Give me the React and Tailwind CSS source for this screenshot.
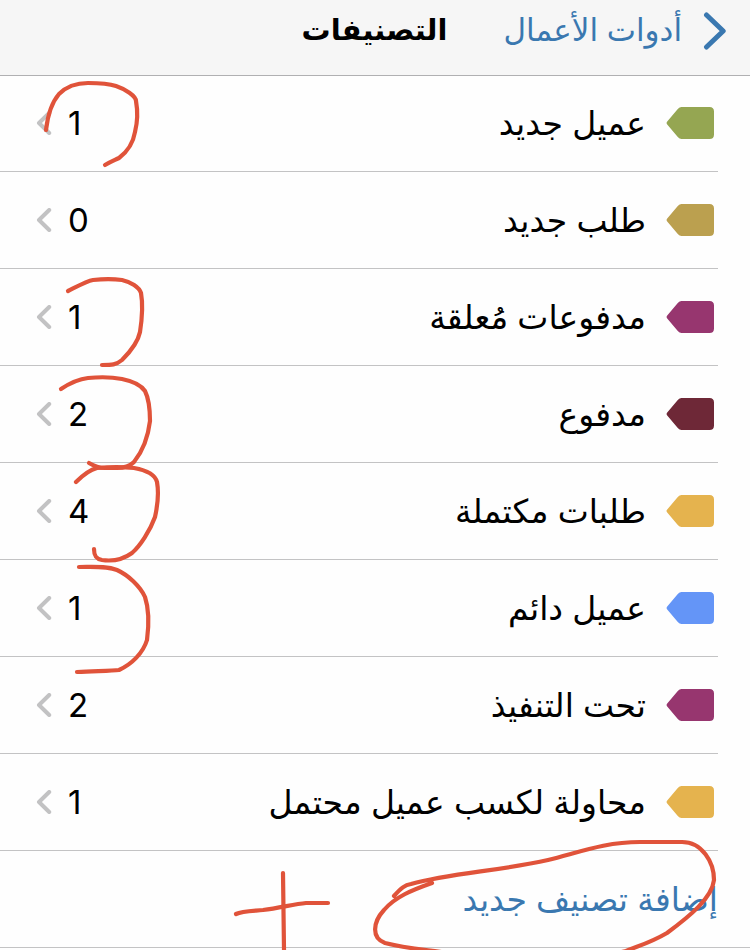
import React from 'react';

const categories = [
    { id: 1, name: 'عميل جديد', count: 1, color: '#95a652' },
    { id: 2, name: 'طلب جديد', count: 0, color: '#bba04f' },
    { id: 3, name: 'مدفوعات مُعلقة', count: 1, color: '#97366f' },
    { id: 4, name: 'مدفوع', count: 2, color: '#6e2837' },
    { id: 5, name: 'طلبات مكتملة', count: 4, color: '#e5b34e' },
    { id: 6, name: 'عميل دائم', count: 1, color: '#6495f7' },
    { id: 7, name: 'تحت التنفيذ', count: 2, color: '#97366f' },
    { id: 8, name: 'محاولة لكسب عميل محتمل', count: 1, color: '#e5b34e' },
];

const TagIcon = ({ color }) => (
    <svg className="w-12 h-8 shrink-0" viewBox="0 0 48 32" fill={color} aria-hidden="true">
        <path d="M15.500 0H43.500Q48 0 48 4.500V27.500Q48 32 43.500 32H15.500Q13.500 32 12 30.200L1 17.200Q0 16 1 14.800L12 1.800Q13.500 0 15.500 0Z" />
    </svg>
);

const ChevronLeft = () => (
    <svg
        className="w-4 h-6 shrink-0 text-[#c2c2c3]"
        viewBox="0 0 16 24"
        fill="none"
        stroke="currentColor"
        strokeWidth="4"
        strokeLinecap="round"
        strokeLinejoin="round"
        aria-hidden="true"
    >
        <path d="M13.200 2L3 12L13.200 22" />
    </svg>
);

const CategoryRow = ({ category }) => (
    <li className="border-b border-[#c3c3c4]">
        <button type="button" className="w-full h-24 pr-1 pl-9 flex items-center text-right cursor-pointer">
            <TagIcon color={category.color} />
            <span className="flex-1 pr-5 text-[33px] leading-10">{category.name}</span>
            <span className="w-6 ml-4 text-[33px] leading-10 text-left" dir="ltr">{category.count}</span>
            <ChevronLeft />
        </button>
    </li>
);

// Hand-drawn marks over the counts and the add button
const Marks = () => (
    <div className="absolute inset-0 pointer-events-none text-[#e0533a]" aria-hidden="true">
        <svg
            className="absolute left-0 top-0 w-[350px] h-[950px]"
            viewBox="0 0 350 950"
            fill="none"
            stroke="currentColor"
            strokeWidth="4.200"
            strokeLinecap="round"
            strokeLinejoin="round"
        >
            <path d="M46 130C48 113 53 101 59 94C67 86 76 83 88 83C99 83 110 84 116 86C125 89 136 96 136 101C138 112 137 124 135 132C133 144 127 152 119 158C115 160 110 162 105 165" />
            <path d="M68 291C78 286 87 281 93 280C103 279 114 279 122 280C131 282 139 287 141 293C143 304 142 319 140 332C138 342 130 352 122 360C116 365 112 365 102 365" />
            <path d="M61 389C70 383 79 379 88 378C98 377 112 377 122 379C132 381 141 385 145 391C149 399 150 411 150 421C148 438 142 452 134 462C129 467 124 468 117 468H105C99 468 94 466 89 463" />
            <path d="M76 482C83 475 89 470 97 468C109 467 124 467 134 468C145 470 155 474 157 482C159 493 157 508 155 517C150 531 140 546 132 553C121 561 109 561 102 560C96 559 94 556 94 549" />
            <path d="M79 567C94 567 107 566 117 570C128 575 140 586 145 597C149 609 149 625 147 640C143 653 132 664 119 670C112 671 96 671 77 672" />
            <path d="M236 914C242 911 252 911 263 910C280 908 294 904 306 903H328" />
            <path d="M283 873L284 950" />
        </svg>
        <svg
            className="absolute right-0 top-0 w-[400px] h-[980px]"
            viewBox="350 0 400 980"
            fill="none"
            stroke="currentColor"
            strokeWidth="4.200"
            strokeLinecap="round"
            strokeLinejoin="round"
        >
            <path d="M394 896C401 888 405 885 411 884C450 873 500 871 548 860C580 852 605 842 640 842H682C702 842 714 862 714 880C712 898 690 916 667 933C650 943 638 946 626 951C560 968 420 952 385 943C371 938 373 922 384 910C395 897 412 890 432 883" />
        </svg>
    </div>
);

const App = () => {
    return (
        <div
            dir="rtl"
            className="relative min-h-screen overflow-hidden bg-[#fefefe] text-black font-[Inter,'DejaVu_Sans',sans-serif]"
        >
            {/* Navigation bar */}
            <header className="h-[76px] pr-6 pb-4 flex items-center bg-[#f6f6f6] border-b border-[#b0b0b2]">
                <a href="#" className="flex items-center gap-5 text-[#3a78b0]">
                    <svg
                        className="w-6 h-10 shrink-0"
                        viewBox="0 0 24 40"
                        fill="none"
                        stroke="currentColor"
                        strokeWidth="5"
                        strokeLinecap="round"
                        strokeLinejoin="round"
                        aria-hidden="true"
                    >
                        <path d="M4.500 5L21.200 21L4.500 37" />
                    </svg>
                    <span className="text-[31px] leading-10">أدوات الأعمال</span>
                </a>
                <h1 className="mr-14 text-[29px] leading-10 font-bold">التصنيفات</h1>
            </header>

            {/* Category list */}
            <main className="-mt-px">
                <ul className="pr-8">
                    {categories.map((category) => (
                        <CategoryRow key={category.id} category={category} />
                    ))}
                </ul>
                <div className="border-b border-[#c3c3c4]">
                    <button type="button" className="w-full h-24 pr-8 text-right text-[33px] leading-10 text-[#3a78b0] cursor-pointer">
                        إضافة تصنيف جديد
                    </button>
                </div>
            </main>

            <Marks />
        </div>
    );
};

export default App;
